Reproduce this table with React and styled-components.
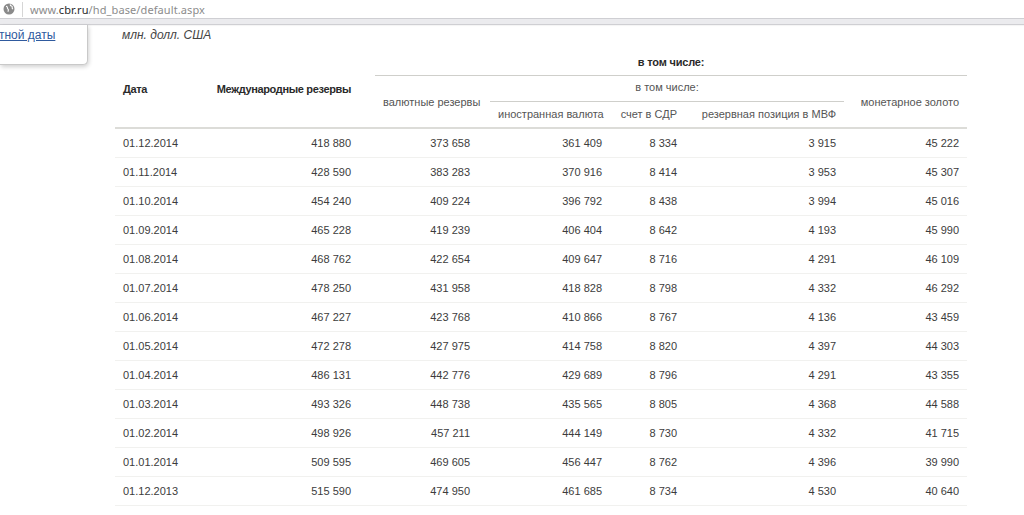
import styled, { createGlobalStyle } from "styled-components";

const rows = [
  ["01.12.2014", "418 880", "373 658", "361 409", "8 334", "3 915", "45 222"],
  ["01.11.2014", "428 590", "383 283", "370 916", "8 414", "3 953", "45 307"],
  ["01.10.2014", "454 240", "409 224", "396 792", "8 438", "3 994", "45 016"],
  ["01.09.2014", "465 228", "419 239", "406 404", "8 642", "4 193", "45 990"],
  ["01.08.2014", "468 762", "422 654", "409 647", "8 716", "4 291", "46 109"],
  ["01.07.2014", "478 250", "431 958", "418 828", "8 798", "4 332", "46 292"],
  ["01.06.2014", "467 227", "423 768", "410 866", "8 767", "4 136", "43 459"],
  ["01.05.2014", "472 278", "427 975", "414 758", "8 820", "4 397", "44 303"],
  ["01.04.2014", "486 131", "442 776", "429 689", "8 796", "4 291", "43 355"],
  ["01.03.2014", "493 326", "448 738", "435 565", "8 805", "4 368", "44 588"],
  ["01.02.2014", "498 926", "457 211", "444 149", "8 730", "4 332", "41 715"],
  ["01.01.2014", "509 595", "469 605", "456 447", "8 762", "4 396", "39 990"],
  ["01.12.2013", "515 590", "474 950", "461 685", "8 734", "4 530", "40 640"],
];

const colWidths = [85, 175, 115, 120, 75, 159, 123];

const GlobalStyle = createGlobalStyle`
  body {
    margin: 0;
    background: #ffffff;
    font-family: "Liberation Sans", Arial, sans-serif;
    overflow: hidden;
  }
`;

const App = () => {
  return (
    <>
      <GlobalStyle />
      <AddressBar>
        <Globe viewBox="0 0 12 12">
          <circle cx="6" cy="6" r="5.5" fill="#8a8a8a" />
          <path
            d="M3 3.2c1 .2 1.6.9 1.4 1.7-.2.7.6 1 .9 1.6.3.7-.3 1.4-.2 2.2M7.4 1.4c-.3.8.2 1.4 1 1.6.8.2 1 .9.8 1.6-.2.6.2 1.2.9 1.3"
            fill="none"
            stroke="#ffffff"
            strokeWidth="1.1"
          />
        </Globe>
        <Divider />
        <Url>
          www.<b>cbr.ru</b>/hd_base/default.aspx
        </Url>
      </AddressBar>
      <Strip />
      <Page>
        <Sidebar>
          <SideLink href="#">тной даты</SideLink>
        </Sidebar>
        <Content>
          <Units>млн. долл. США</Units>
          <Table>
            <colgroup>
              {colWidths.map((w, i) => (
                <col key={i} style={{ width: w }} />
              ))}
            </colgroup>
            <thead>
              <TopRow>
                <MainTh rowSpan={3} $align="left">
                  Дата
                </MainTh>
                <MainTh rowSpan={3} $pr={24}>
                  Международные резервы
                </MainTh>
                <GroupTh colSpan={5} $bold>
                  в том числе:
                </GroupTh>
              </TopRow>
              <MidRow>
                <SubTh rowSpan={2} $pr={20}>
                  валютные резервы
                </SubTh>
                <GroupTh colSpan={3}>в том числе:</GroupTh>
                <SubTh rowSpan={2}>монетарное золото</SubTh>
              </MidRow>
              <LeafRow>
                <LeafTh>иностранная валюта</LeafTh>
                <LeafTh>счет в СДР</LeafTh>
                <LeafTh>резервная позиция в МВФ</LeafTh>
              </LeafRow>
            </thead>
            <tbody>
              {rows.map((r) => (
                <Row key={r[0]}>
                  {r.map((v, i) => (
                    <Td
                      key={i}
                      $align={i === 0 ? "left" : "right"}
                      $pr={i === 1 ? 24 : i === 2 ? 20 : 8}
                    >
                      {v}
                    </Td>
                  ))}
                </Row>
              ))}
            </tbody>
          </Table>
        </Content>
      </Page>
    </>
  );
};

const AddressBar = styled.div`
  height: 18px;
  display: flex;
  align-items: center;
  background: #ffffff;
`;

const Globe = styled.svg`
  width: 12px;
  height: 12px;
  margin-left: 3px;
`;

const Divider = styled.div`
  width: 1px;
  height: 15px;
  background: #d6d6d6;
  margin: 0 7px 0 7px;
`;

const Url = styled.div`
  font-family: "Noto Sans", "Open Sans", sans-serif;
  font-size: 11px;
  color: #8c8c8c;
  letter-spacing: 0.1px;

  & b {
    font-weight: 400;
    color: #2a2a2a;
  }
`;

const Strip = styled.div`
  height: 5px;
  background: #ebebee;
  border-top: 1px solid #cfcfd3;
  border-bottom: 1px solid #cfcfd3;
  box-shadow: 0 1px 1px rgba(0, 0, 0, 0.04);
`;

const Page = styled.div`
  display: flex;
  align-items: flex-start;
`;

const Sidebar = styled.div`
  width: 88px;
  height: 40px;
  flex-shrink: 0;
  box-sizing: border-box;
  padding: 3px 0 0 0;
  border-right: 1px solid #c9c9c9;
  border-bottom: 1px solid #c9c9c9;
  border-bottom-right-radius: 5px;
  box-shadow: 1px 2px 4px rgba(0, 0, 0, 0.18);
  background: #ffffff;
  overflow: hidden;
`;

const SideLink = styled.a`
  display: block;
  margin-left: -1px;
  font-size: 12px;
  color: #2f5a9e;
  text-decoration: underline;
  white-space: nowrap;
`;

const Content = styled.div`
  margin-left: 27px;
  padding-top: 3px;
`;

const Units = styled.div`
  font-size: 12px;
  font-style: italic;
  color: #444444;
  padding-left: 7px;
  height: 21px;
`;

const Table = styled.table`
  border-collapse: collapse;
  table-layout: fixed;
  width: 852px;
  font-size: 11px;
  color: #3c3c3c;
`;

const TopRow = styled.tr`
  height: 26px;
`;

const MidRow = styled.tr`
  height: 26px;
`;

const LeafRow = styled.tr`
  height: 27px;
`;

const Th = styled.th`
  font-weight: 400;
  color: #555555;
  text-align: ${(p) => p.$align || "right"};
  vertical-align: middle;
  padding: 0 ${(p) => p.$pr || 8}px 0 8px;
  white-space: nowrap;
  border-bottom: 2px solid #dcdcd8;
`;

const MainTh = styled(Th)`
  font-weight: 700;
  color: #2a2a2a;
  letter-spacing: -0.35px;
  padding-top: 2px;
`;

const GroupTh = styled(Th)`
  text-align: center;
  padding: 0 8px ${(p) => (p.$bold ? 0 : 2)}px 8px;
  font-weight: ${(p) => (p.$bold ? 700 : 400)};
  color: ${(p) => (p.$bold ? "#2a2a2a" : "#555555")};
  letter-spacing: ${(p) => (p.$bold ? "-0.2px" : "0")};
  border-bottom: 1px solid #cfcfcb;
`;

const SubTh = styled(Th)`
  padding-top: 2px;
`;

const LeafTh = styled(Th)`
  padding-bottom: 1px;
`;

const Row = styled.tr`
  height: 29px;
  border-bottom: 1px solid #f1f1ef;
`;

const Td = styled.td`
  text-align: ${(p) => p.$align};
  padding: 0 ${(p) => p.$pr}px 0 8px;
  white-space: nowrap;
`;

export default App;
